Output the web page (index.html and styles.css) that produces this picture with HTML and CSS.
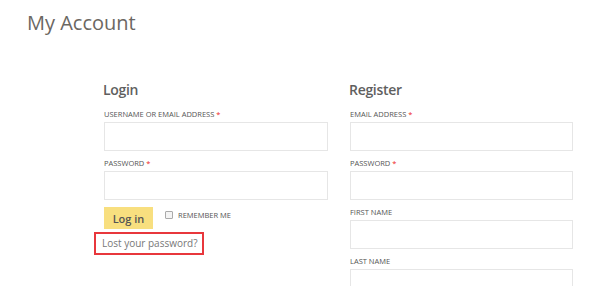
FILE: index.html
```html
<!DOCTYPE html>
<html>
<head>
<meta charset="utf-8">
<link rel="stylesheet" href="styles.css">
</head>
<body>
<div class="page">
  <h1 class="title">My Account</h1>
  <div class="cols">
    <div class="col">
      <h2 class="heading">Login</h2>
      <div class="field">
        <label class="label">Username or email address <span class="req">*</span></label>
        <div class="input"></div>
      </div>
      <div class="field">
        <label class="label">Password <span class="req">*</span></label>
        <div class="input"></div>
      </div>
      <div class="actions">
        <button class="btn">Log in</button>
        <label class="remember"><span class="check"></span>Remember me</label>
      </div>
      <div class="lost">Lost your password?</div>
    </div>
    <div class="col">
      <h2 class="heading">Register</h2>
      <div class="field">
        <label class="label">Email address <span class="req">*</span></label>
        <div class="input"></div>
      </div>
      <div class="field">
        <label class="label">Password <span class="req">*</span></label>
        <div class="input"></div>
      </div>
      <div class="field">
        <label class="label">First name</label>
        <div class="input"></div>
      </div>
      <div class="field">
        <label class="label">Last name</label>
        <div class="input"></div>
      </div>
    </div>
  </div>
</div>
</body>
</html>
```
FILE: styles.css
```css
html, body { margin: 0; padding: 0; background: #fff; }
body { font-family: "Open Sans", sans-serif; color: #666; overflow: hidden; height: 286px; }
.page { padding: 9px 0 0 27px; }
.title { margin: 0; font-size: 20px; font-weight: 400; color: #6b6762; line-height: 28px; }
.cols { display: grid; grid-template-columns: 224px 223px; column-gap: 22px; margin: 43px 0 0 77px; }
.heading { margin: 0 0 6px -1px; font-size: 14px; letter-spacing: -0.3px; font-weight: 600; color: #5f5f5f; line-height: 20px; }
.field { margin-bottom: 4px; }
.label { display: block; font-size: 7.5px; text-transform: uppercase; color: #555; line-height: 12px; padding-top: 2px; margin-bottom: 2px; }
.req { color: #e22; }
.input { height: 27px; border: 1px solid #e6e6e6; background: #fff; }
.actions { display: flex; align-items: flex-start; margin-top: 7px; }
.btn { font-family: inherit; border: 0; background: #f8df7f; color: #555; font-size: 11px; font-weight: 600; width: 49px; height: 22px; padding: 0; margin: 0; }
.remember { display: flex; align-items: center; font-size: 7.5px; text-transform: uppercase; color: #555; margin: 3px 0 0 12px; }
.check { width: 6px; height: 6px; border: 1px solid #aaa; border-radius: 1px; margin-right: 5px; background: #f4f4f4; }
.lost { width: max-content; margin: 3px 0 0 -10px; padding: 3px 4px 3px 6px; border: 2px solid #e8373c; font-size: 10px; color: #777; line-height: 13px; }
```
